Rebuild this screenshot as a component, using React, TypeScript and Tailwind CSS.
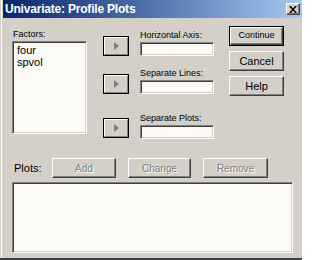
const raised =
  "border border-t-white border-l-white border-r-[#404040] border-b-[#404040] shadow-[inset_-1px_-1px_0_#808080]";
const sunken =
  "border border-t-[#808080] border-l-[#808080] border-r-white border-b-white shadow-[inset_1px_1px_0_#404040,inset_-1px_-1px_0_#d4d0c8]";

function ArrowButton() {
  return (
    <div className="w-[26px] h-[20px] border border-black bg-[#d4d0c8]">
      <div className="w-full h-full flex items-center justify-center border border-t-white border-l-white border-r-[#808080] border-b-[#808080]">
        <div className="w-0 h-0 border-l-[5px] border-l-[#808080] border-y-[4px] border-y-transparent ml-[1px]" />
      </div>
    </div>
  );
}

function Field({ label }: { label: string }) {
  return (
    <div className="flex flex-col">
      <div className="h-[14px] text-[9px] leading-[14px] text-black">{label}</div>
      <div className={`w-[74px] h-[14px] bg-[#fbfaf5] ${sunken}`} />
    </div>
  );
}

function DisabledButton({ label, w }: { label: string; w: string }) {
  return (
    <div
      className={`${w} h-[20px] flex items-center justify-center text-[10px] text-[#808080] [text-shadow:1px_1px_0_#fff] ${raised}`}
    >
      {label}
    </div>
  );
}

export default function App() {
  return (
    <div
      className="w-[302px] h-[260px] overflow-hidden bg-[#d4d0c8] flex flex-col border-b-2 border-b-[#404040] shadow-[inset_1px_0_0_#d4d0c8,inset_2px_0_0_#fff]"
      style={{ fontFamily: '"Liberation Sans", Arial, sans-serif' }}
    >
      {/* title bar */}
      <div className="ml-[3px] h-[18px] flex items-center justify-between pl-[2px] pr-[2px] bg-gradient-to-r from-[#0a246a] to-[#a6caf0]">
        <span className="text-white text-[12px] font-bold tracking-[-0.2px]">Univariate: Profile Plots</span>
        <div className={`w-[14px] h-[12px] flex items-center justify-center bg-[#d4d0c8] ${raised}`}>
          <svg width="8" height="7" viewBox="0 0 8 7">
            <path d="M0 0h2l2 2.5L6 0h2L5 3.5 8 7H6L4 4.5 2 7H0l3-3.5z" fill="#000" />
          </svg>
        </div>
      </div>

      <div className="pl-[12px] pt-[9px] flex flex-col">
        <div className="flex items-start">
          {/* factors */}
          <div className="w-[75px] flex flex-col">
            <div className="h-[14px] text-[9px] leading-[14px] pl-[1px] text-black">Factors:</div>
            <div className={`h-[93px] bg-[#fbfaf5] pt-[2px] pl-[4px] text-[11px] leading-[12px] text-black ${sunken}`}>
              <div>four</div>
              <div>spvol</div>
            </div>
          </div>

          {/* arrows + fields */}
          <div className="ml-[16px] flex flex-col">
            <div className="flex items-end gap-[11px] mt-[1px]">
              <ArrowButton />
              <Field label="Horizontal Axis:" />
            </div>
            <div className="flex items-end gap-[11px] mt-[10px]">
              <ArrowButton />
              <Field label="Separate Lines:" />
            </div>
            <div className="flex items-end gap-[11px] mt-[17px]">
              <div className="mb-[1px]">
                <ArrowButton />
              </div>
              <Field label="Separate Plots:" />
            </div>
          </div>

          {/* dialog buttons */}
          <div className="ml-[15px] -mt-[1px] flex flex-col gap-[5px]">
            <div className="w-[55px] h-[20px] border border-black">
              <div className={`w-full h-full flex items-center justify-center text-[9px] text-black ${raised}`}>
                Continue
              </div>
            </div>
            <div className={`w-[55px] h-[20px] flex items-center justify-center text-[11px] text-black ${raised}`}>
              Cancel
            </div>
            <div className={`w-[55px] h-[20px] flex items-center justify-center text-[11px] text-black ${raised}`}>
              Help
            </div>
          </div>
        </div>

        {/* plots */}
        <div className="mt-[19px] flex items-center">
          <span className="w-[40px] pl-[2px] text-[11px] text-black">Plots:</span>
          <div className="flex gap-[12px]">
            <DisabledButton label="Add" w="w-[64px]" />
            <DisabledButton label="Change" w="w-[63px]" />
            <DisabledButton label="Remove" w="w-[65px]" />
          </div>
        </div>
        <div className={`mt-[4px] w-[281px] h-[71px] bg-[#fbfaf5] ${sunken}`} />
      </div>
    </div>
  );
}
